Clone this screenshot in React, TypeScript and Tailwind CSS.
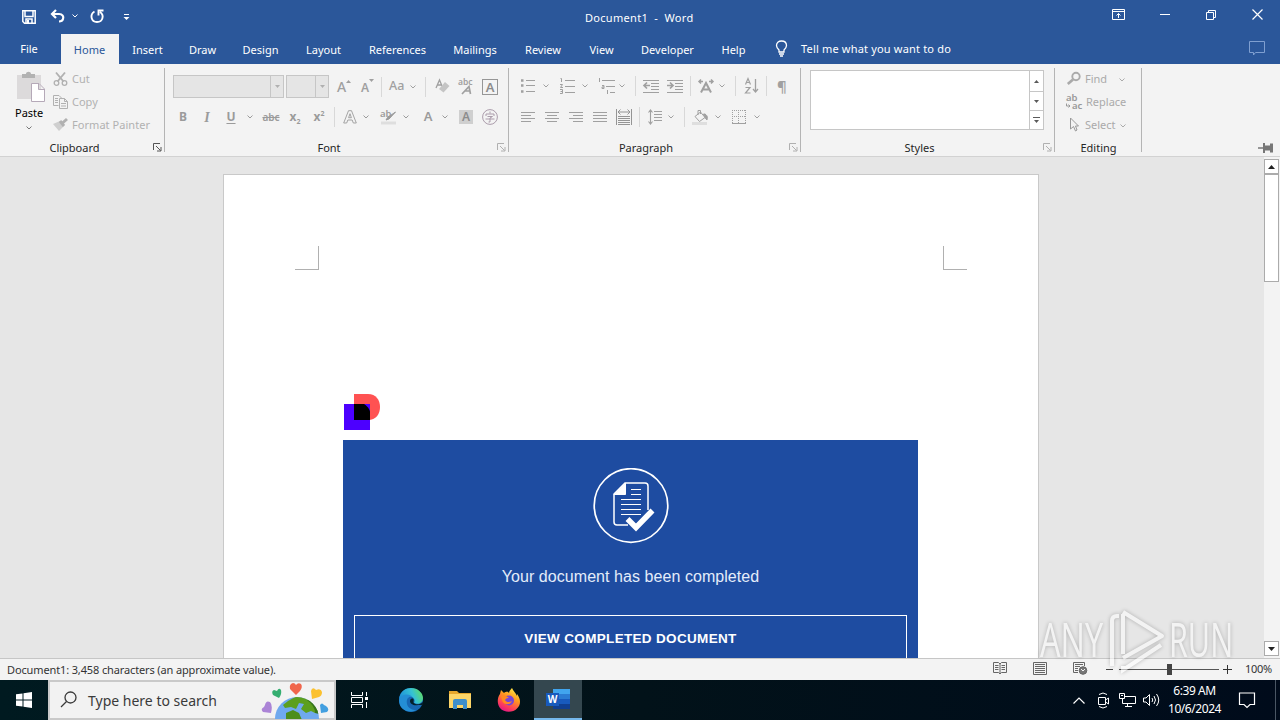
import type { ReactNode } from 'react'
import clsx from 'clsx'

interface IconProps {
  w: number
  h: number
  className?: string
  children: ReactNode
}

// Stroke icon, one unit per pixel
function Icon({ w, h, className, children }: IconProps) {
  return (
    <svg
      width={w}
      height={h}
      viewBox={`0 0 ${w} ${h}`}
      fill="none"
      stroke="currentColor"
      className={clsx('shrink-0 overflow-visible', className)}
    >
      {children}
    </svg>
  )
}

function Chevron({ className }: { className?: string }) {
  return (
    <Icon w={6} h={4} className={className}>
      <path d="M.5 .5 L3 3 L5.500 .5" />
    </Icon>
  )
}

function Sep({ className }: { className?: string }) {
  return <div className={clsx('h-5 w-px shrink-0 bg-[#d8d8d8]', className)} />
}

function Launcher({ className }: { className?: string }) {
  return (
    <Icon w={9} h={9} className={clsx('absolute bottom-1', className)}>
      <path d="M.5 7V.5H7M3 3L7.500 7.500M8 4V8H4" />
    </Icon>
  )
}

interface GroupProps {
  label: string
  className: string
  labelClass?: string
  launcherClass?: string
  children: ReactNode
}

function Group({ label, className, labelClass, launcherClass, children }: GroupProps) {
  return (
    <div className={clsx('relative flex h-[92px] shrink-0 flex-col', className)}>
      <div className="h-[75px]">{children}</div>
      <div className={clsx('text-center leading-[17px] text-[#262626]', labelClass)}>{label}</div>
      {launcherClass && <Launcher className={launcherClass} />}
      <div className="absolute top-1 right-0 h-[84px] w-px bg-[#b4b4b4]" />
    </div>
  )
}

function TitleBar() {
  return (
    <div className="flex h-[34px] items-center text-white">
      <Icon w={14} h={14} className="ml-[22px]">
        <path d="M.8 .8H13.200V13.200H2.500L.8 11.500ZM3 1V6.500H11V1M4 13V9H10V13" strokeWidth="1.500" />
        <path d="M5 10H7V13H5Z" fill="currentColor" stroke="none" />
      </Icon>
      <Icon w={15} h={14} className="-mt-[2px] ml-[14px]">
        <path d="M6 1L2 5L6 9M2 5H9C12.500 5 14 7.500 13 10C12.500 11.800 11 12.500 9 12.500" strokeWidth="2.200" />
      </Icon>
      <Chevron className="-mt-[2px] ml-[7px]" />
      <Icon w={14} h={14} className="-mt-[2px] ml-[12px]">
        <path d="M4.500 2.500C-.5 5.500 1 13 7 13C13 13 14.500 6 10 3M8.500 6.500V1.500H13.500" strokeWidth="1.900" />
      </Icon>
      <Icon w={7} h={7} className="ml-[19px]">
        <path d="M1 .5H6" />
        <path d="M.5 3H6.500L3.500 6Z" fill="currentColor" stroke="none" />
      </Icon>
      <div className="mt-[2px] ml-[455px] w-[109px] text-[11px] tracking-[0.3px] whitespace-pre">Document1  -  Word</div>
      <Icon w={13} h={11} className="mb-[5px] ml-[418px]">
        <path d="M.5 .5H12.500V10.500H.5ZM.5 2.500H12.500M6.500 9V4.500M4.500 6.500L6.500 4.500L8.500 6.500" />
      </Icon>
      <Icon w={10} h={1} className="mb-[5px] ml-[35px]">
        <path d="M0 .5H10" />
      </Icon>
      <Icon w={10} h={10} className="mb-1 ml-[36px]">
        <path d="M.5 2.500H7.500V9.500H.5ZM2.500 2V.5H9.500V7.500H8" />
      </Icon>
      <Icon w={11} h={11} className="mb-[5px] ml-[36px]">
        <path d="M.5 .5L10.500 10.500M10.500 .5L.5 10.500" strokeWidth="1.200" />
      </Icon>
    </div>
  )
}

const tabs = [
  { label: 'Home', width: 'w-[58px]' },
  { label: 'Insert', width: 'w-[57px]' },
  { label: 'Draw', width: 'w-[53px]' },
  { label: 'Design', width: 'w-[63px]' },
  { label: 'Layout', width: 'w-[63px]' },
  { label: 'References', width: 'w-[85px]' },
  { label: 'Mailings', width: 'w-[70px]' },
  { label: 'Review', width: 'w-[66px]' },
  { label: 'View', width: 'w-[51px]' },
  { label: 'Developer', width: 'w-[81px]' },
  { label: 'Help', width: 'w-[51px]' },
]

function Tabs() {
  return (
    <div className="flex h-[30px] text-white">
      <div className="w-[61px] pr-[3px] text-center leading-[30px]">File</div>
      {tabs.map((tab, i) => (
        <div
          key={tab.label}
          className={clsx('text-center leading-[32px]', tab.width, i === 0 && 'bg-[#f3f3f3] pr-px text-[#2b579a]')}
        >
          {tab.label}
        </div>
      ))}
      <Icon w={13} h={17} className="mt-[6px] ml-[16px]">
        <path d="M4 12V10C2.500 8.500 1.500 7.500 1.500 5.500C1.500 2.800 3.500 1 6.500 1S11.500 2.800 11.500 5.500C11.500 7.500 10.500 8.500 9 10V12ZM4 14H9M5 16H8" strokeWidth="1.300" />
      </Icon>
      <div className="ml-[13px] w-[155px] leading-[30px] tracking-[0.18px] whitespace-nowrap">Tell me what you want to do</div>
      <Icon w={17} h={15} className="mt-[7px] ml-[293px] text-[#7f9fd0]">
        <path d="M.5 .5H15.500V11.500H6.500L4.500 14V11.500H.5Z" />
      </Icon>
    </div>
  )
}

function ClipboardGroup() {
  return (
    <Group label="Clipboard" className="w-[165px]" labelClass="pr-4" launcherClass="left-[153px] text-[#555]">
      <div className="flex">
        <div className="ml-[15px] flex w-[31px] flex-col">
          <Icon w={30} h={31} className="mt-[7px] ml-[2px]">
            <path d="M0 4H24V28H0Z" fill="#dcdadb" stroke="none" />
            <path d="M5 3H9C9 0 14 0 14 3H18V7H5Z" fill="#b2b2b2" stroke="none" />
            <path d="M14.500 12.500H22L27.500 18V30.500H14.500ZM21.500 12.500V18.500H27.500" fill="#fff" stroke="#b5a9b8" />
          </Icon>
          <span className="mt-[3px] w-[31px] leading-4">Paste</span>
          <Chevron className="mt-[5px] ml-[11px] text-[#777]" />
        </div>
        <div className="ml-[7px] flex flex-col pt-[4px] text-[#b1b1b1]">
          <div className="flex h-[23px] items-center gap-[4px]">
            <Icon w={15} h={14} className="-mt-[2px]">
              <path d="M3 .5L10.500 9.500M12 .5L4.500 9.500" strokeWidth="1.900" />
              <circle cx="3.500" cy="11" r="2.300" strokeWidth="1.300" />
              <circle cx="11.500" cy="11" r="2.300" strokeWidth="1.300" />
            </Icon>
            <span>Cut</span>
          </div>
          <div className="flex h-[23px] items-center gap-[4px]">
            <Icon w={15} h={14} className="-mt-[2px]">
              <path d="M5.500 10.500H.5V.5H6L9 3.500M2 3.500H5M2 5.500H5M2 7.500H5M6.500 3.500H11.500L14.500 6.500V13.500H6.500ZM11.500 3.500V6.500H14.500M8 8.500H13M8 11H13" />
            </Icon>
            <span>Copy</span>
          </div>
          <div className="flex h-[23px] items-center gap-[4px]">
            <Icon w={15} h={14} className="-mt-[2px]">
              <path d="M0 6L7 3L11 8L6 13Z" fill="#cfcfcf" stroke="none" />
              <path d="M7 3L11 8M9.500 5L14 1" strokeWidth="3" />
            </Icon>
            <span className="tracking-[0.05px]">Format Painter</span>
          </div>
        </div>
      </div>
    </Group>
  )
}

function Combo({ className }: { className: string }) {
  return (
    <div className={clsx('flex h-[23px] justify-end border border-[#c6c6c6] bg-[#e5e5e5]', className)}>
      <div className="flex w-[13px] items-center justify-center border-l border-[#c6c6c6]">
        <Icon w={5} h={3}>
          <path d="M0 0H5L2.500 3Z" fill="#b0b0b0" stroke="none" />
        </Icon>
      </div>
    </div>
  )
}

function FontGroup() {
  return (
    <Group label="Font" className="w-[344px]" labelClass="pr-4" launcherClass="left-[332px] text-[#b0b0b0]">
      <div className="mt-[11px] flex h-[23px] items-center pl-2 text-[#a0a0a0]">
        <Combo className="w-[111px]" />
        <Combo className="ml-[2px] w-[43px]" />
        <div className="ml-[8px] flex w-[24px] text-[14px] font-medium">
          A
          <Icon w={5} h={3} className="mt-[4px]">
            <path d="M0 3H5L2.500 0Z" fill="currentColor" stroke="none" />
          </Icon>
        </div>
        <div className="flex w-[20px] pt-[2px] text-[12px] font-semibold">
          A
          <Icon w={5} h={3}>
            <path d="M0 0H5L2.500 3Z" fill="currentColor" stroke="none" />
          </Icon>
        </div>
        <Sep />
        <div className="ml-[7px] w-[18px] text-[12.500px] font-medium">Aa</div>
        <Chevron className="ml-[3px]" />
        <Sep className="ml-[9px]" />
        <Icon w={15} h={15} className="ml-[9px]">
          <path d="M1 9L4.500 1L7 7M2.500 6H7" strokeWidth="1.300" />
          <path d="M4 10L10 3L14.500 7L8.500 13.500Z" fill="#c4c4c4" stroke="none" />
        </Icon>
        <Icon w={16} h={17} className="ml-[8px]">
          <text x="0" y="7" fontSize="8.500" fontWeight="600" fill="currentColor" stroke="none">abc</text>
          <path d="M4 16L11 8.500L12.500 16M7 13H12" strokeWidth="1.700" />
        </Icon>
        <div className="ml-[8px] h-4 w-4 border border-[#969696] text-center text-[13px] leading-[14px] font-semibold text-[#8c8c8c]">A</div>
      </div>
      <div className="mt-[9px] flex h-[20px] items-center text-[#9b9b9b]">
        <div className="ml-[6px] w-6 text-center text-[12px] font-bold">B</div>
        <div className="w-6 text-center font-['Liberation_Serif'] text-[14px] font-bold italic">I</div>
        <div className="w-6 text-center text-[12px] font-bold underline underline-offset-2">U</div>
        <Chevron className="ml-[4px]" />
        <div className="ml-[6px] w-6 text-center text-[10px] font-semibold line-through">abc</div>
        <div className="w-6 text-center text-[12px] font-bold">
          x<span className="relative top-[3px] text-[7px]">2</span>
        </div>
        <div className="w-6 text-center text-[12px] font-bold">
          x<span className="relative -top-[5px] text-[7px]">2</span>
        </div>
        <Sep className="ml-[3px]" />
        <Icon w={14} h={14} className="ml-[8px]">
          <path d="M.7 13L5.500 .7H8.500L13.300 13H10.300L9.200 10H4.800L3.700 13ZM5.600 7.700H8.400L7 3.700Z" strokeWidth=".9" />
        </Icon>
        <Chevron className="ml-[6px]" />
        <Icon w={18} h={16} className="ml-[11px]">
          <text x="0" y="8" fontSize="9.500" fontWeight="600" fill="currentColor" stroke="none">ab</text>
          <path d="M15.500 3L9 10L6 11L7.500 8.500Z" fill="currentColor" strokeWidth="1" />
          <path d="M1 14H16" stroke="#dedede" strokeWidth="3" />
        </Icon>
        <Chevron className="ml-[5px]" />
        <div className="ml-[11px] w-[16px] text-center text-[13px] font-semibold">A</div>
        <Chevron className="ml-[6px]" />
        <div className="ml-[11px] h-[14px] w-[14px] bg-[#cfcfcf] text-center text-[12px] leading-[14px] font-semibold text-[#8c8c8c]">A</div>
        <Icon w={16} h={16} className="ml-[9px] text-[#ab9cab]">
          <circle cx="8" cy="8" r="7.400" />
          <path d="M8 2.500V4.500M4 7V5H12V7M5.500 7.500H10.500L8 9V13H6.500M3.500 10H12.500" />
        </Icon>
      </div>
    </Group>
  )
}

function ParagraphGroup() {
  return (
    <Group label="Paragraph" className="w-[292px]" labelClass="pr-[18px]" launcherClass="left-[280px] text-[#b0b0b0]">
      <div className="mt-[10px] flex h-[23px] items-center text-[#a0a0a0]">
        <Icon w={14} h={14} className="ml-[12px]">
          <path d="M5 1.500H14M5 6.500H14M5 12.500H14" />
          <path d="M0 1.500H2.500M0 6.500H2.500M0 12.500H2.500" strokeWidth="2.500" />
        </Icon>
        <Chevron className="ml-[8px]" />
        <Icon w={15} h={16} className="ml-[11px]">
          <path d="M5 2.500H15M5 8.500H15M5 14.500H15M.5 .5H1.500V4M0 6.500H2.500L.5 9.500H3M0 11.500H2.500V15.500H0M.5 13.500H2.500" />
        </Icon>
        <Chevron className="ml-[7px]" />
        <Icon w={17} h={16} className="ml-[10px]">
          <path d="M4 2.500H17M8 8.500H17M12 14.500H17M1.500 0V4M4 7.500H6V10.500H4V9H6M9.500 12V16" />
        </Icon>
        <Chevron className="ml-[4px]" />
        <Sep className="ml-[10px]" />
        <Icon w={16} h={14} className="ml-[7px]">
          <path d="M0 1.500H16M8 4.500H16M8 7.500H16M8 10.500H16M0 13.500H16" />
          <path d="M7 6.500H1M4 3.500L1 6.500L4 9.500" strokeWidth="1.700" />
        </Icon>
        <Icon w={16} h={14} className="ml-[8px]">
          <path d="M0 1.500H16M8 4.500H16M8 7.500H16M8 10.500H16M0 13.500H16" />
          <path d="M0 6.500H6M3 3.500L6 6.500L3 9.500" strokeWidth="1.700" />
        </Icon>
        <Sep className="ml-[7px]" />
        <Icon w={16} h={14} className="ml-[7px]">
          <path d="M3 13.500L8 4L13 13.500M5 10.500H11" strokeWidth="2" />
          <path d="M5 2.500H1M3 .5L1 2.500L3 4.500M11 2.500H15M13 .5L15 2.500L13 4.500" strokeWidth="1.500" />
        </Icon>
        <Chevron className="ml-[5px]" />
        <Sep className="ml-[10px]" />
        <Icon w={15} h={16} className="ml-[9px]">
          <path d="M.5 6.500L3 .5L5.500 6.500M1.500 4.500H4.500M.5 9.500H5L.5 15H5.500" strokeWidth="1.200" />
          <path d="M10.500 1V14M8 11L10.500 14L13 11" strokeWidth="1.300" />
        </Icon>
        <Sep className="ml-[6px]" />
        <div className="ml-[10px] text-[15px] leading-5 font-semibold">¶</div>
      </div>
      <div className="mt-[10px] flex h-[20px] items-center text-[#a0a0a0]">
        <Icon w={14} h={11} className="ml-[12px]">
          <path d="M0 .5H14M0 3.500H10M0 6.500H14M0 9.500H10" />
        </Icon>
        <Icon w={14} h={11} className="ml-[10px]">
          <path d="M0 .5H14M2 3.500H12M0 6.500H14M2 9.500H12" />
        </Icon>
        <Icon w={14} h={11} className="ml-[10px]">
          <path d="M0 .5H14M4 3.500H14M0 6.500H14M4 9.500H14" />
        </Icon>
        <Icon w={14} h={11} className="ml-[10px]">
          <path d="M0 .5H14M0 3.500H14M0 6.500H14M0 9.500H14" />
        </Icon>
        <Icon w={16} h={16} className="ml-[9px] text-[#959595]">
          <path d="M.5 0V16M15.500 0V16M2 3H14M4.500 .5L2 3L4.500 5.500M11.500 .5L14 3L11.500 5.500M2 7.500H14M2 9.500H14M2 11.500H14M2 13.500H14M2 15.500H14" />
        </Icon>
        <Sep className="ml-[7px]" />
        <Icon w={15} h={16} className="ml-[8px]">
          <path d="M6 2.500H14M6 5.500H14M6 8.500H14M6 11.500H14M2.500 1V15M.5 3.500L2.500 1L4.500 3.500M.5 12.500L2.500 15L4.500 12.500" strokeWidth="1.100" />
        </Icon>
        <Chevron className="ml-[5px]" />
        <Sep className="ml-[10px]" />
        <Icon w={17} h={16} className="ml-[7px]">
          <path d="M3 7.500L8.500 3L13 8.500L7.500 12.500ZM6 6V1.500H8.500V5" />
          <path d="M13 5C16 7 15.500 9 15 11C13.500 10 13 8 11.500 5Z" fill="currentColor" />
          <path d="M0 14.500H15" stroke="#dedede" strokeWidth="3" />
        </Icon>
        <Chevron className="ml-[6px]" />
        <Icon w={14} h={14} className="ml-[11px]">
          <path d="M0 .5H14M.5 0V13M13.500 0V13M6.500 0V13M0 6.500H14" strokeDasharray="1 1" />
          <path d="M0 13.500H14" />
        </Icon>
        <Chevron className="ml-[8px]" />
      </div>
    </Group>
  )
}

function StylesGroup() {
  return (
    <Group label="Styles" className="w-[254px]" labelClass="pr-[17px]" launcherClass="left-[242px] text-[#b0b0b0]">
      <div className="mt-[6px] ml-[9px] flex h-[60px] w-[234px] border border-[#c6c6c6] bg-white">
        <div className="ml-auto flex w-[14px] flex-col border-l border-[#c6c6c6] text-[#5a5a5a]">
          <div className="flex h-[21px] items-center justify-center border-b border-[#c6c6c6]">
            <Icon w={5} h={3}>
              <path d="M0 3H5L2.500 0Z" fill="currentColor" stroke="none" />
            </Icon>
          </div>
          <div className="flex h-[19px] items-center justify-center border-b border-[#c6c6c6]">
            <Icon w={5} h={3}>
              <path d="M0 0H5L2.500 3Z" fill="currentColor" stroke="none" />
            </Icon>
          </div>
          <div className="flex h-[18px] items-center justify-center">
            <Icon w={7} h={7}>
              <path d="M0 .5H7" />
              <path d="M1 3H6L3.500 6Z" fill="currentColor" stroke="none" />
            </Icon>
          </div>
        </div>
      </div>
    </Group>
  )
}

function EditingGroup() {
  return (
    <Group label="Editing" className="w-[87px]">
      <div className="flex flex-col pt-[4px] pl-[11px] text-[#aaa]">
        <div className="flex h-[23px] items-center">
          <Icon w={15} h={13} className="-mt-[2px] ml-[1px]">
            <circle cx="9" cy="4.500" r="3.700" strokeWidth="1.900" />
            <path d="M6 7.500L.8 12" strokeWidth="2.700" />
          </Icon>
          <span className="ml-[3px] w-[33px]">Find</span>
          <Chevron className="ml-[1px]" />
        </div>
        <div className="flex h-[23px] items-center">
          <Icon w={17} h={17} className="-mt-px text-[#999]">
            <text x="0" y="7" fontSize="9.500" fontWeight="600" fill="currentColor" stroke="none">ab</text>
            <text x="6" y="15" fontSize="9.500" fontWeight="600" fill="currentColor" stroke="none">ac</text>
            <path d="M.5 9.500V12H4M2.500 10.500L4 12L2.500 13.500" />
          </Icon>
          <span className="ml-[3px]">Replace</span>
        </div>
        <div className="flex h-[23px] items-center">
          <Icon w={16} h={15} className="-mt-[2px] ml-[3px] text-[#999]">
            <path d="M1.500 1V12L4.500 9.500L6.500 14L8 13L6.500 9H9.500Z" />
          </Icon>
          <span className="w-[33px]">Select</span>
          <Chevron className="ml-[2px]" />
        </div>
      </div>
    </Group>
  )
}

function Ribbon() {
  return (
    <div className="flex h-[93px] border-b border-[#d2d2d2] bg-[#f3f3f3]">
      <ClipboardGroup />
      <FontGroup />
      <ParagraphGroup />
      <StylesGroup />
      <EditingGroup />
      <Icon w={16} h={10} className="mt-[79px] ml-[116px] text-[#777]">
        <path d="M0 5H5" strokeWidth="1.500" />
        <path d="M5 0H7V2.500H12V.5H15V9.500H12V7.500H7V10H5Z" fill="currentColor" stroke="none" />
      </Icon>
    </div>
  )
}

function ScrollButton({ up, className }: { up?: boolean; className?: string }) {
  return (
    <div className={clsx('flex h-[15px] items-center justify-center border border-[#ababab] bg-white', className)}>
      <Icon w={7} h={4} className="text-[#222]">
        <path d={up ? 'M0 4H7L3.500 0Z' : 'M0 0H7L3.500 4Z'} fill="currentColor" stroke="none" />
      </Icon>
    </div>
  )
}

function DocumentArea() {
  return (
    <div className="flex h-[501px] overflow-hidden bg-[#e6e6e6]">
      <div className="mt-[17px] ml-[223px] h-[500px] w-[816px] shrink-0 border border-[#c9c9c9] bg-white">
        <div className="mt-[71px] flex justify-between px-[71px]">
          <div className="h-6 w-6 border-r border-b border-[#b0b0b0]" />
          <div className="h-6 w-6 border-b border-l border-[#b0b0b0]" />
        </div>
        <svg width="37" height="37" viewBox="0 0 37 37" className="mt-[124px] ml-[120px]">
          <path d="M10 0H24C32 0 36 6 36 13S32 26 24 26H10Z" fill="#ff5252" />
          <path d="M0 10H26V36H0Z" fill="#4c00ff" />
          <path d="M10 10H20C22 11 26 15 26 18V26H10Z" fill="#000" />
        </svg>
        <div className="mt-[9px] ml-[119px] flex h-[240px] w-[575px] flex-col items-center bg-[#1e4ca1] font-['Liberation_Sans',sans-serif] text-white">
          <svg width="76" height="76" viewBox="0 0 76 76" fill="none" stroke="#fff" className="mt-[28px] ml-[1px] shrink-0">
            <circle cx="38" cy="37.500" r="36.800" strokeWidth="1.700" />
            <path d="M35 57H24Q21 57 21 54V26L32 15H52Q55 15 55 18V42" strokeWidth="1.500" />
            <path d="M21 26.500L32.500 15V26.500Z" fill="#fff" />
            <path d="M38 21.500H48M38 26.500H48M28 31.500H48M28 36.500H48M28 41.500H48M28 46.500H48" />
            <path d="M34.500 51L43 59.500L59.500 42.500" strokeWidth="5.500" />
          </svg>
          <div className="mt-[22px] text-[16px] leading-[22px] tracking-[0.06px] whitespace-nowrap text-[#e4ecfa]">Your document has been completed</div>
          <div className="mt-[27px] h-[60px] w-[553px] shrink-0 border border-white text-center text-[13.500px] leading-[45px] font-bold tracking-[0.33px]">
            VIEW COMPLETED DOCUMENT
          </div>
        </div>
      </div>
      <div className="ml-auto flex w-4 flex-col bg-[#f3f3f3] pt-[2px] pr-px">
        <ScrollButton up />
        <div className="h-[108px] border border-[#ababab] bg-white" />
        <ScrollButton className="mt-auto mb-[2px]" />
      </div>
    </div>
  )
}

function StatusBar() {
  return (
    <div className="flex h-[22px] items-center border-t border-[#c6c6c6] bg-[#f3f3f3] text-[#333]">
      <div className="mt-[2px] ml-[7px] w-[270px] tracking-[-0.13px] whitespace-nowrap">Document1: 3,458 characters (an approximate value).</div>
      <Icon w={14} h={13} className="-mt-[2px] ml-[716px] text-[#666]">
        <path d="M7 2L5.500 .5H.5V10.500H5.500L7 12L8.500 10.500H13.500V.5H8.500ZM7 2V12M2 3.500H5.500M2 5.500H5.500M2 7.500H5.500M8.500 3.500H12M8.500 5.500H12M8.500 7.500H12" />
      </Icon>
      <Icon w={14} h={13} className="-mt-[2px] ml-[26px] text-[#666]">
        <path d="M.5 .5H13.500V12.500H.5ZM2 2.500H12M2 4.500H12M2 6.500H12M2 8.500H12M2 10.500H12" />
      </Icon>
      <Icon w={14} h={13} className="-mt-[2px] ml-[26px] text-[#666]">
        <path d="M5 10.500H.5V.5H11.500V4M2 2.500H10M2 4.500H7M2 6.500H5M2 8.500H5" />
        <circle cx="10" cy="8.500" r="3.800" fill="#777" />
        <path d="M8 7L10 9L12 7" stroke="#f3f3f3" />
      </Icon>
      <div className="ml-[19px] h-px w-[7px] bg-[#444]" />
      <div className="ml-[6px] flex h-[11px] w-[100px] items-center">
        <div className="h-px w-12 bg-[#555]" />
        <div className="h-[11px] w-[5px] bg-[#444]" />
        <div className="h-px w-[47px] bg-[#555]" />
      </div>
      <Icon w={9} h={9} className="-mt-px ml-[4px]">
        <path d="M0 4.500H9M4.500 0V9" />
      </Icon>
      <div className="ml-[13px] tracking-[-0.3px]">100%</div>
    </div>
  )
}

function Globe() {
  return (
    <svg width="68" height="37" viewBox="0 0 68 37">
      <defs>
        <clipPath id="globe">
          <circle cx="36" cy="37" r="22" />
        </clipPath>
      </defs>
      <circle cx="36" cy="37" r="22" fill="#6fa9ee" />
      <g clipPath="url(#globe)">
        <path d="M27 19L36 14L48 15L56 24L58 30L54 31L50 29L45 31L40 27L43 22L38 21L35 27L30 25L24 26L22 23Z" fill="#5c9f1e" />
        <path d="M25 31L32 28L38 31L41 38H25Z" fill="#4c8d1b" />
        <path d="M48 15Q58 22 58 32L54 31Q54 24 46 18Z" fill="#39751a" />
      </g>
      <path d="M35 13L29 7Q28 2 32 1Q34 1 35 3Q37 0 40 2Q42 5 39 9Z" fill="#f0664c" />
      <path d="M18 16L12 13Q10 9 13 8L16 9Q18 5 20 8Q21 12 18 16Z" fill="#35ae70" />
      <path d="M51 17L50 9Q51 5 54 7L55 8Q60 6 61 10Q61 14 58 15Z" fill="#fbc12f" />
      <path d="M10 31L2 30Q-1 27 3 25L4 23Q5 18 9 20Q12 23 10 31Z" fill="#ab84d6" />
      <path d="M60 31L59 23Q61 20 63 23L65 24Q69 27 66 30Z" fill="#429fe0" />
    </svg>
  )
}

function Edge() {
  return (
    <svg width="24" height="24" viewBox="0 0 24 24">
      <defs>
        <linearGradient id="edge" x1="0" y1=".5" x2="1" y2=".2">
          <stop offset="0" stopColor="#1d8fd8" />
          <stop offset=".55" stopColor="#35c1d5" />
          <stop offset="1" stopColor="#63df5b" />
        </linearGradient>
      </defs>
      <circle cx="12" cy="12" r="12" fill="#1767b3" />
      <path d="M0 11C1 3 7 0 12 0C19 0 24 5 24 10C24 15 19 17 15 15C17 12 14 8 10 8C5 8 2 9 0 11Z" fill="url(#edge)" />
      <path d="M0 12C2 6 10 5 13 9C9 8 7 12 8 16C9 20 13 22 17 22C10 26 0 22 0 12Z" fill="#248ed5" />
      <path d="M11 13C11 11.500 12 10 14 10.500C15.500 12 14 13.500 14.500 14.500C16 17 21 17 24 14V17H19C15 18 11 16 11 13Z" fill="#04202c" />
    </svg>
  )
}

function Firefox() {
  return (
    <svg width="24" height="24" viewBox="0 0 24 24">
      <defs>
        <linearGradient id="fox" x1=".8" y1="0" x2=".3" y2="1">
          <stop offset="0" stopColor="#fff04a" />
          <stop offset=".4" stopColor="#ff9a1f" />
          <stop offset=".75" stopColor="#ff4157" />
          <stop offset="1" stopColor="#e31587" />
        </linearGradient>
      </defs>
      <path d="M3 6L4 2L7 5C10 3 11 4 12 5C12 3 14 1 15 0C16 3 19 5 20 8L20 6C24 11 24 17 20 20.500C16 25 7 25 3 20C0 16 0 10 3 6Z" fill="url(#fox)" />
      <circle cx="12" cy="12.500" r="5" fill="#7745d8" />
      <path d="M4 8C7 7 10 8 12 10C9 10 9 11 8 12C9 14 12 15 15 13C13 18 6 17 5 12Z" fill="#ff8a20" />
    </svg>
  )
}

function Taskbar() {
  return (
    <div className="flex h-10 items-center bg-linear-to-r from-[#001a20] via-[#021219] to-[#000b1b] text-white">
      <svg width="16" height="16" viewBox="0 0 16 16" fill="#fff" className="ml-4">
        <path d="M0 2.300L6.500 1.400V7.500H0ZM7.500 1.200L16 0V7.500H7.500ZM0 8.500H6.500V14.600L0 13.700ZM7.500 8.500H16V16L7.500 14.800Z" />
      </svg>
      <div className="ml-4 flex h-10 w-[288px] items-center border-2 border-[#c9c9c9] bg-[#f2f2f2] text-[#3a3a3a]">
        <Icon w={18} h={18} className="ml-[10px]">
          <circle cx="10.500" cy="6.500" r="5.500" strokeWidth="1.300" />
          <path d="M6.500 10.500L1 16" strokeWidth="1.300" />
        </Icon>
        <div className="ml-[10px] w-[173px] text-[14px] whitespace-nowrap">Type here to search</div>
        <Globe />
      </div>
      <Icon w={17} h={16} className="ml-[15px]">
        <path d="M.5 0V3.500H11.500V0M.5 16V12.500H11.500V16M.5 5.500H11.500V10.500H.5ZM15.500 0V4M15.500 10V16" />
        <path d="M14 5H17V8H14Z" fill="currentColor" stroke="none" />
      </Icon>
      <div className="ml-[31px]"><Edge /></div>
      <svg width="22" height="20" viewBox="0 0 22 20" className="ml-[26px]">
        <path d="M0 1H8L10 3H22V18H0Z" fill="#e6a72c" />
        <path d="M0 4H22V18H0Z" fill="#fcd568" />
        <path d="M4 18V11Q4 9 6 9H16Q18 9 18 11V19H14V15H8V19H4Z" fill="#3d8ecb" />
      </svg>
      <div className="ml-[26px]"><Firefox /></div>
      <div className="ml-[13px] flex h-10 w-12 items-center justify-center border-b-2 border-[#76b9ed] bg-[#34474f]">
        <svg width="24" height="22" viewBox="0 0 24 22">
          <path d="M7 1H24V6H7Z" fill="#41a5ee" />
          <path d="M7 6H24V11H7Z" fill="#2b7cd3" />
          <path d="M7 11H24V16H7Z" fill="#185abd" />
          <path d="M7 16H24V21H7Z" fill="#103f91" />
          <path d="M0 5H13V18H0Z" fill="#185abd" />
          <text x="6.500" y="15" fontSize="10" fontWeight="700" fill="#fff" textAnchor="middle">W</text>
        </svg>
      </div>
      <Icon w={12} h={7} className="ml-[491px]">
        <path d="M.5 6.500L6 1L11.500 6.500" strokeWidth="1.200" />
      </Icon>
      <Icon w={13} h={17} className="ml-[12px]">
        <path d="M1.500 5.500H8.500V12.500H1.500ZM8.500 8L11.500 6V12L8.500 10M2 2.500Q6 -.5 10 2.500M2 14.500Q6 17.500 10 14.500" />
      </Icon>
      <Icon w={17} h={14} className="ml-[9px]">
        <path d="M5 3.500H16.500V10.500H3.500V6M6 13.500H13M8.500 10.500V13M.5 .5H5.500V5.500H.5ZM2 2.500H4" />
      </Icon>
      <Icon w={17} h={14} className="ml-[7px]">
        <path d="M.5 5H3L6.500 1.500V12.500L3 9H.5ZM9 5Q10.500 7 9 9M11 3Q14 7 11 11M13.500 1Q18 7 13.500 13" />
      </Icon>
      <div className="ml-[3px] w-[63px] text-center text-[12px] leading-[18px] tracking-[-0.45px]">
        6:39 AM<br />10/6/2024
      </div>
      <Icon w={16} h={16} className="ml-[13px]">
        <path d="M.5 1H15.500V12.500H11L8 15.500L5 12.500H.5Z" strokeWidth="1.200" />
      </Icon>
      <div className="ml-[20px] h-10 w-px bg-[#4a5664]" />
    </div>
  )
}

// Sits over the document corner and the status bar
function Watermark() {
  return (
    <div className="pointer-events-none absolute top-[608px] left-[1040px] flex h-[66px] w-[196px] items-center font-['Open_Sans'] text-[47px] leading-none font-medium text-white opacity-55 drop-shadow-[0_0_2px_rgba(0,0,0,0.45)]">
      <span className="-mt-[3px] w-[68px] origin-left scale-x-[0.69]">ANY</span>
      <Icon w={58} h={66}>
        <path d="M11 8H9Q4 8 4 13V58M15 6V46M15 58V62L53 37" strokeWidth="4" />
        <path d="M15 4L54 28L15 50" strokeWidth="4" strokeLinejoin="round" />
      </Icon>
      <span className="-mt-[3px] ml-[3px] w-[64px] origin-left scale-x-[0.65]">RUN</span>
    </div>
  )
}

export default function App() {
  return (
    <div className="relative h-[720px] w-[1280px] overflow-hidden bg-[#2b579a] font-['Noto_Sans',sans-serif] text-[11px]">
      <TitleBar />
      <Tabs />
      <Ribbon />
      <DocumentArea />
      <StatusBar />
      <Taskbar />
      <Watermark />
    </div>
  )
}
